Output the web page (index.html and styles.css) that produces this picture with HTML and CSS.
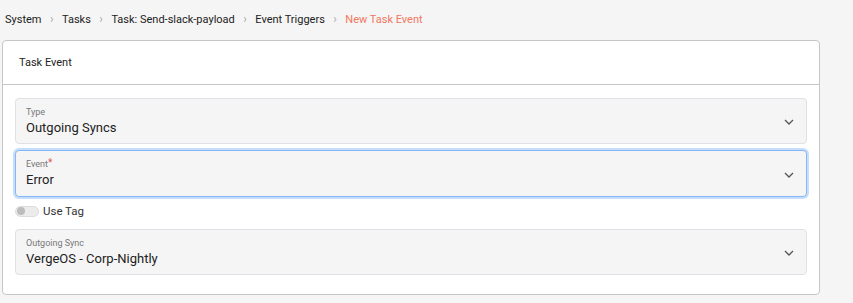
FILE: index.html
```html
<!DOCTYPE html>
<html lang="en">
<head>
    <meta charset="UTF-8">
    <meta name="viewport" content="width=device-width, initial-scale=1.0">
    <title>New Task Event</title>
    <link rel="stylesheet" href="styles.css">
</head>
<body>
    <nav class="breadcrumb">
        <span class="crumb">System</span>
        <span class="sep">&rsaquo;</span>
        <span class="crumb">Tasks</span>
        <span class="sep">&rsaquo;</span>
        <span class="crumb">Task: Send-slack-payload</span>
        <span class="sep">&rsaquo;</span>
        <span class="crumb">Event Triggers</span>
        <span class="sep">&rsaquo;</span>
        <span class="crumb active">New Task Event</span>
    </nav>

    <div class="card">
        <div class="card-header">Task Event</div>
        <div class="card-body">
            <div class="field">
                <div class="field-text">
                    <div class="field-label">Type</div>
                    <div class="field-value">Outgoing Syncs</div>
                </div>
                <svg class="chevron" width="10" height="6" viewBox="0 0 10 6"><path d="M1 1l4 4 4-4" fill="none" stroke="#555" stroke-width="1.3"/></svg>
            </div>

            <div class="field focused">
                <div class="field-text">
                    <div class="field-label">Event<span class="req">*</span></div>
                    <div class="field-value">Error</div>
                </div>
                <svg class="chevron" width="10" height="6" viewBox="0 0 10 6"><path d="M1 1l4 4 4-4" fill="none" stroke="#555" stroke-width="1.3"/></svg>
            </div>

            <label class="toggle-row">
                <span class="toggle"><span class="knob"></span></span>
                Use Tag
            </label>

            <div class="field">
                <div class="field-text">
                    <div class="field-label">Outgoing Sync</div>
                    <div class="field-value">VergeOS - Corp-Nightly</div>
                </div>
                <svg class="chevron" width="10" height="6" viewBox="0 0 10 6"><path d="M1 1l4 4 4-4" fill="none" stroke="#555" stroke-width="1.3"/></svg>
            </div>
        </div>
    </div>
</body>
</html>
```

FILE: styles.css
```css
body {
    margin: 0;
    background-color: #f5f5f5;
    font-family: Roboto, "Liberation Sans", Arial, sans-serif;
    color: #222;
}

/* breadcrumb */
.breadcrumb {
    display: flex;
    align-items: center;
    height: 38px;
    padding-left: 5px;
    font-size: 11px;
}

.crumb {
    color: #222;
}

.crumb.active {
    color: #f2775f;
}

.sep {
    width: 20.5px;
    text-align: center;
    color: #aaa;
    font-size: 12px;
}

/* card */
.card {
    width: 816px;
    margin: 2px 0 0 2px;
    background-color: #fff;
    border: 1px solid #c6c6c6;
    border-radius: 4px;
}

.card-header {
    height: 43px;
    line-height: 43px;
    padding-left: 16px;
    font-size: 11px;
    border-bottom: 1px solid #c6c6c6;
}

.card-body {
    display: flex;
    flex-direction: column;
    padding: 13px 12px 19px 12px;
}

/* select fields */
.field {
    display: flex;
    align-items: center;
    height: 44px;
    padding: 0 12px 0 10px;
    background-color: #f5f5f5;
    border: 1px solid #e0e0e6;
    border-radius: 4px;
}

.field + .field {
    margin-top: 6px;
}

.field.focused {
    height: 45px;
    border-color: #86b7f5;
    box-shadow: 0 0 0 2px #c7defb;
}

.field-text {
    flex: 1;
    align-self: flex-start;
    padding-top: 7px;
}

.field-label {
    font-size: 9px;
    line-height: 12px;
    color: #777;
}

.req {
    color: #e05555;
    font-size: 10px;
    vertical-align: top;
    line-height: 9px;
}

.field-value {
    margin-top: 1px;
    font-size: 13px;
    line-height: 17px;
    color: #222;
}

.chevron {
    margin-top: 2px;
}

/* toggle */
.toggle-row {
    display: flex;
    align-items: center;
    gap: 4px;
    margin: 7px 0 11px 0;
    font-size: 11.5px;
    color: #333;
}

.toggle {
    display: flex;
    align-items: center;
    width: 20px;
    height: 9px;
    padding: 0 1px;
    background-color: #ececec;
    border: 1px solid #dcdcdc;
    border-radius: 6px;
}

.knob {
    width: 8px;
    height: 8px;
    border-radius: 50%;
    background-color: #bdbdbd;
}
```
